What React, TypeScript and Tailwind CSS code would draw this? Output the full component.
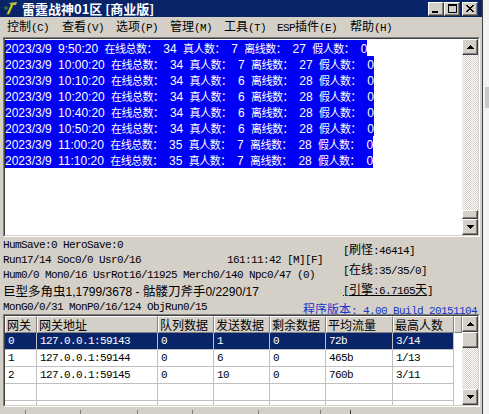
import React from 'react'

const CJK_RE = /([\u2e80-\u9fff\uff00-\uffef]+)/

const MONO = "font-['Liberation_Mono','Noto_Sans_CJK_SC',monospace] text-[11px] tracking-[-0.6px]"
const CJK12 = "font-['Noto_Sans_CJK_SC',sans-serif] text-[12px] tracking-normal"
const LOG_CJK = "font-['Noto_Sans_CJK_SC',sans-serif] text-[11px] tracking-[-0.5px]"
const RAISED =
  'bg-[#d4d0c8] border border-t-white border-l-white border-r-[#404040] border-b-[#404040] shadow-[inset_-1px_-1px_0_#808080]'

function Mix({ text, cjk = CJK12 }: { text: string; cjk?: string }) {
  return (
    <>
      {text.split(CJK_RE).map((part, i) =>
        i % 2 ? (
          <span key={i} className={cjk}>
            {part}
          </span>
        ) : (
          <React.Fragment key={i}>{part}</React.Fragment>
        ),
      )}
    </>
  )
}

function Arrow({ up }: { up?: boolean }) {
  return (
    <svg width="7" height="4" viewBox="0 0 7 4" shapeRendering="crispEdges">
      <polygon points={up ? '3.5,0 7,4 0,4' : '0,0 7,0 3.5,4'} fill="#000" />
    </svg>
  )
}

function ScrollBar({ thumbAtEnd, thumbH }: { thumbAtEnd?: boolean; thumbH: string }) {
  return (
    <div className="flex w-[16px] shrink-0 flex-col">
      <div className={`${RAISED} flex h-[16px] shrink-0 items-center justify-center`}>
        <Arrow up />
      </div>
      <div className="flex flex-1 flex-col bg-[repeating-conic-gradient(#d4d0c8_0%_25%,#ffffff_0%_50%)] bg-[length:2px_2px]">
        {thumbAtEnd && <div className="flex-1" />}
        <div className={`${RAISED} ${thumbH} shrink-0`} />
      </div>
      <div className={`${RAISED} flex h-[16px] shrink-0 items-center justify-center`}>
        <Arrow />
      </div>
    </div>
  )
}

const logRows = [
  ['9:50:20', '34', '7', '27'],
  ['10:00:20', '34', '7', '27'],
  ['10:10:20', '34', '6', '28'],
  ['10:20:20', '34', '6', '28'],
  ['10:40:20', '34', '6', '28'],
  ['10:50:20', '34', '6', '28'],
  ['11:00:20', '35', '7', '28'],
  ['11:10:20', '35', '7', '28'],
]

const columns = [
  { name: '网关', w: '32px' },
  { name: '网关地址', w: '121px' },
  { name: '队列数据', w: '56px' },
  { name: '发送数据', w: '56px' },
  { name: '剩余数据', w: '56px' },
  { name: '平均流量', w: '67px' },
  { name: '最高人数', w: '61px' },
]

const gateways = [
  ['0', '127.0.0.1:59143', '0', '1', '0', '72b', '3/14'],
  ['1', '127.0.0.1:59144', '0', '6', '0', '465b', '1/13'],
  ['2', '127.0.0.1:59145', '0', '10', '0', '760b', '3/11'],
  ['', '', '', '', '', '', ''],
  ['', '', '', '', '', '', ''],
]

const menus = [
  { label: '控制(C)', w: 'w-[55px]' },
  { label: '查看(V)', w: 'w-[54px]' },
  { label: '选项(P)', w: 'w-[54px]' },
  { label: '管理(M)', w: 'w-[54px]' },
  { label: '工具(T)', w: 'w-[53px]' },
  { label: 'ESP插件(E)', w: 'w-[73px]' },
  { label: '帮助(H)', w: 'w-[60px]' },
]

function Sunken({ className, children }: { className: string; children: React.ReactNode }) {
  return (
    <div className={`ml-[3px] mr-[2px] border border-t-[#808080] border-l-[#808080] border-r-white border-b-white ${className}`}>
      <div className="flex h-full border border-t-[#404040] border-l-[#404040] border-r-[#d4d0c8] border-b-[#d4d0c8] bg-white">
        {children}
      </div>
    </div>
  )
}

export default function App() {
  return (
    <div className="flex h-[414px] w-[489px] overflow-hidden bg-[#f2f2f2]">
      <div className="flex h-full w-[483px] shrink-0 flex-col border-r border-[#404040] bg-[#d4d0c8]">
        {/* title bar */}
        <div className="flex h-[17px] shrink-0 items-center bg-[#0a246a] pl-[3px] pr-[4px]">
          <svg width="15" height="15" viewBox="0 0 15 15">
            <rect x="0" y="0" width="15" height="15" fill="#0a246a" />
            <polygon points="3,14 6,14 11,3 8,3" fill="#4b5a12" />
            <polygon points="4,13 6,13 10,4 8,4" fill="#d8d030" />
            <polygon points="6,2 14,1 13,4 8,4" fill="#b8c040" />
            <polygon points="1,6 4,5 5,8 2,9" fill="#2e7a2a" />
          </svg>
          <span className="ml-[4px] font-['Noto_Sans_CJK_SC',sans-serif] text-[13px] font-bold leading-[17px] text-white">
            雷霆战神01区 [商业版]
          </span>
          <div className="flex-1" />
          <div className={`${RAISED} flex h-[14px] w-[16px] items-end justify-center pb-[2px]`}>
            <div className="ml-[-2px] h-[2px] w-[6px] bg-black" />
          </div>
          <div className={`${RAISED} flex h-[14px] w-[16px] items-center justify-center`}>
            <div className="h-[9px] w-[9px] border border-t-2 border-black" />
          </div>
          <div className={`${RAISED} ml-[2px] flex h-[14px] w-[16px] items-center justify-center`}>
            <svg width="8" height="7" viewBox="0 0 8 7" shapeRendering="crispEdges">
              <path d="M0 0h2l2 2.5L6 0h2L5 3.5 8 7H6L4 4.5 2 7H0l3-3.5z" fill="#000" />
            </svg>
          </div>
        </div>

        {/* menu bar */}
        <div className={`flex h-[20px] shrink-0 items-center pl-[7px] leading-[18px] text-black ${MONO}`}>
          {menus.map((m) => (
            <span key={m.label} className={`${m.w} whitespace-nowrap`}>
              <Mix text={m.label} />
            </span>
          ))}
        </div>

        {/* log box */}
        <Sunken className="h-[200px] shrink-0">
          <div className="flex-1 overflow-hidden pt-[1px] font-['Liberation_Sans','Noto_Sans_CJK_SC',sans-serif] text-[12px] leading-[16px] [word-spacing:3px]">
            {logRows.map((r) => (
              <div key={r[0]} className="h-[16px]">
                <span className="inline-block h-[16px] whitespace-nowrap bg-[#0000f4] text-white">
                  <Mix
                    cjk={LOG_CJK}
                    text={`2023/3/9 ${r[0]} 在线总数： ${r[1]} 真人数： ${r[2]} 离线数： ${r[3]} 假人数： 0`}
                  />
                </span>
              </div>
            ))}
          </div>
          <ScrollBar thumbAtEnd thumbH="h-[9px]" />
        </Sunken>

        {/* status panel */}
        <div className={`flex h-[77px] shrink-0 text-black ${MONO}`}>
          <div className="w-[343px] shrink-0 pl-[3px] pt-[1px] leading-[15px]">
            <div className="whitespace-nowrap">HumSave:0 HeroSave:0</div>
            <div className="flex whitespace-nowrap">
              <span className="w-[224px]">Run17/14 Soc0/0 Usr0/16</span>
              <span>161:11:42 [M][F]</span>
            </div>
            <div className="whitespace-nowrap">Hum0/0 Mon0/16 UsrRot16/11925 Merch0/140 Npc0/47 (0)</div>
            <div className="whitespace-nowrap font-['Liberation_Sans','Noto_Sans_CJK_SC',sans-serif] text-[12px] tracking-normal">
              <Mix
                cjk="font-['Noto_Sans_CJK_SC',sans-serif] text-[12.5px]"
                text="巨型多角虫1,1799/3678 - 骷髅刀斧手0/2290/17"
              />
            </div>
            <div className="whitespace-nowrap">MonG0/0/31 MonP0/16/124 ObjRun0/15</div>
          </div>
          <div className="flex w-0 min-w-0 flex-1 flex-col items-start pr-[5px] pt-[3px] leading-[18px]">
            <div className="whitespace-nowrap">
              <Mix text="[刷怪:46414]" />
            </div>
            <div className="whitespace-nowrap">
              <Mix text="[在线:35/35/0]" />
            </div>
            <div className="whitespace-nowrap underline">
              <Mix text="[引擎:6.7165天]" />
            </div>
            <div className="self-end whitespace-nowrap text-[#1435c8]">
              <Mix text="程序版本: 4.00 Build 20151104" />
            </div>
          </div>
        </div>

        {/* gateway table */}
        <Sunken className="h-[93px] shrink-0">
          <div className={`flex-1 overflow-hidden text-black ${MONO}`}>
            <div className="grid grid-cols-[32px_121px_56px_56px_56px_67px_61px_1fr]">
              {columns.map((c) => (
                <div
                  key={c.name}
                  className="h-[17px] overflow-hidden whitespace-nowrap border border-t-white border-l-white border-r-[#808080] border-b-[#808080] bg-[#d4d0c8] pl-[1px] leading-[15px]"
                >
                  <Mix text={c.name} />
                </div>
              ))}
              <div className="h-[17px] border border-t-white border-l-white border-r-[#808080] border-b-[#808080] bg-[#d4d0c8]" />
            </div>
            {gateways.map((row, i) => (
              <div key={i} className="grid grid-cols-[32px_121px_56px_56px_56px_67px_61px_1fr]">
                {row.map((cell, j) => (
                  <div
                    key={j}
                    className={`h-[17px] whitespace-nowrap border-b border-r border-[#c0c0c0] pl-[3px] leading-[16px] ${
                      i === 0 ? 'bg-[#0a246a] text-white' : ''
                    }`}
                  >
                    {cell}
                  </div>
                ))}
                <div className="h-[17px]" />
              </div>
            ))}
          </div>
          <ScrollBar thumbH="h-[16px]" />
        </Sunken>

        {/* status bar */}
        <div className="flex flex-1 pt-[3px]">
          <div className="w-[25px]" />
          <div className="w-[55px] border-l border-[#808080]" />
          <div className="w-[57px] border-l border-[#808080]" />
          <div className="w-[55px] border-l border-[#808080]" />
          <div className="w-[66px] border-l border-[#808080]" />
          <div className="w-[62px] border-l border-[#808080]" />
          <div className="w-[30px] border-l border-[#808080]" />
          <div className="flex-1 border-l border-[#404040]" />
        </div>
      </div>
      <div className="flex flex-1 flex-col">
        <div className="h-[87px]" />
        <div className="ml-[2px] h-[21px] bg-[#c8c8c8]" />
      </div>
    </div>
  )
}
